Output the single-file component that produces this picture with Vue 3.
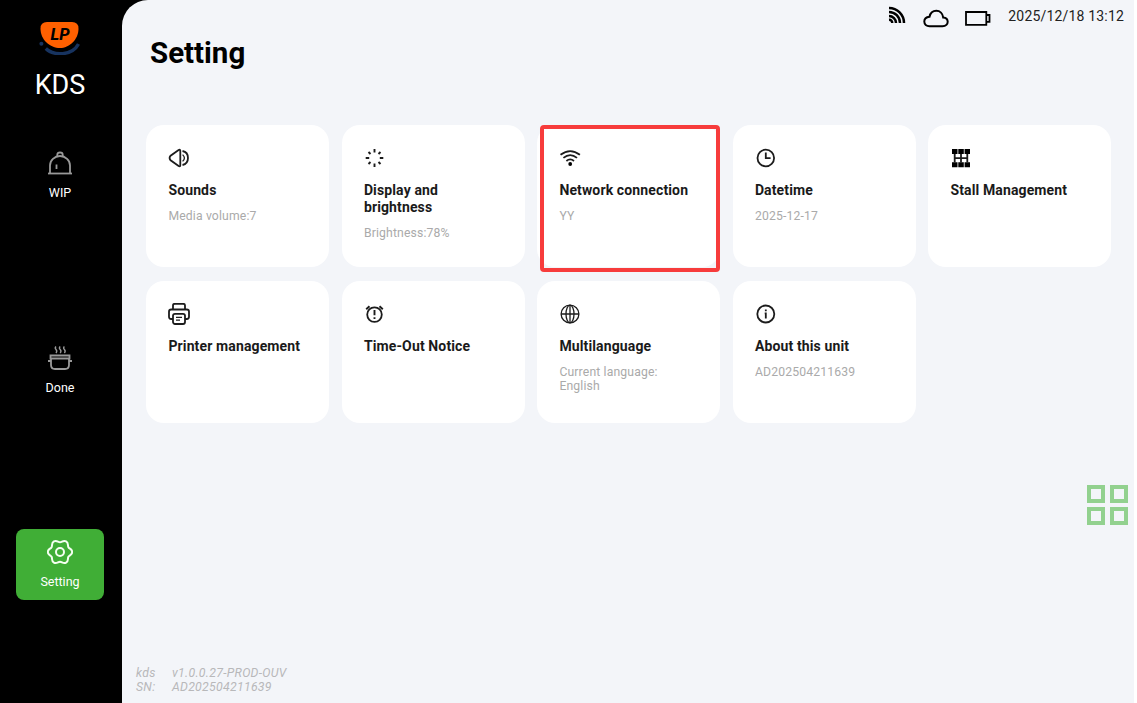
<template>
  <div class="kds-page">
    <aside class="sidebar">
      <svg class="logo" width="42" height="34" viewBox="0 0 42 34">
        <path
          d="M3.5 22.5C8 35 32 37 39.5 23"
          fill="none"
          stroke="#17335f"
          stroke-width="3.4"
          stroke-dasharray="0 6 50"
        />
        <circle cx="2.4" cy="22.8" r="2" fill="#17335f" />
        <path
          d="M8 1H33Q39.5 1 39.5 7.5C39.5 19 30 27 21 27C11 27 1.5 19 1.5 7.5Q1.5 1 8 1Z"
          fill="#ff6000"
        />
        <text x="11.5" y="18.8" class="logo-text">LP</text>
      </svg>
      <div class="brand">KDS</div>

      <nav class="menu">
        <div
          v-for="item in menu"
          :key="item.id"
          class="menu-item"
          :class="{ active: item.id === activeMenu }"
          @click="activeMenu = item.id"
        >
          <svg class="menu-icon" width="26" height="26" viewBox="0 0 26 26">
            <g v-if="item.id === 'wip'">
              <path d="M1 23.5H25" />
              <path d="M3 23V15.5A10 9.500 0 0 1 23 15.500V23" />
              <path d="M10.300 6V4.700Q10.300 2.500 13 2.500T15.700 4.700V6M9.500 14.500V19" />
            </g>
            <g v-else-if="item.id === 'done'">
              <path d="M3.500 10.500H22.500V13.500H3.500ZM4 13.500V20Q4 24 8 24H18Q22 24 22 20V13.500M1 16H4M22 16H25" />
              <path
                d="M9 1.500Q7.500 3 9 4.500T9 8M13.200 1.500Q11.700 3 13.200 4.500T13.200 8M17.400 1.500Q15.900 3 17.400 4.500T17.400 8"
                stroke-width="1.400"
              />
            </g>
            <g v-else>
              <path
                d="M25.200 13C25.200 16.200 22.400 16.100 21.400 17.850C20.400 19.600 21.870 21.970 19.100 23.570C16.330 25.170 15 22.700 13 22.700C11 22.700 9.670 25.170 6.900 23.570C4.130 21.970 5.600 19.600 4.600 17.850C3.600 16.100 .8 16.200 .8 13C.8 9.800 3.600 9.900 4.600 8.150C5.600 6.400 4.130 4.030 6.900 2.430C9.670 .83 11 3.300 13 3.300C15 3.300 16.330 .83 19.100 2.430C21.870 4.030 20.400 6.400 21.400 8.150C22.400 9.900 25.200 9.800 25.200 13Z"
              />
              <circle cx="13" cy="13" r="4" />
            </g>
          </svg>
          <span class="menu-label">{{ item.label }}</span>
        </div>
      </nav>
    </aside>

    <main class="content">
      <header class="header">
        <h1 class="page-title">Setting</h1>
        <div class="status-bar">
          <svg class="rss" width="18" height="18" viewBox="0 0 18 18">
            <path d="M1 13.800A3 3 0 0 1 4.200 17M1 10A7 7 0 0 1 8 17M1 6A11 11 0 0 1 12 17M1 2A15 15 0 0 1 16 17" />
          </svg>
          <svg class="cloud" width="26" height="19" viewBox="0 0 26 19">
            <path
              d="M6.500 17.200H19.500C23 17.200 24.700 15 24.700 12.800C24.700 10.300 22.800 8.700 20.200 8.500C19.700 4.700 17 1.800 13.300 1.800C9.800 1.800 7.300 4.200 6.500 7.700C3.400 8 1.300 10 1.300 12.600C1.300 15.400 3.500 17.200 6.500 17.200Z"
            />
          </svg>
          <svg class="battery" width="26" height="15" viewBox="0 0 26 15">
            <path d="M1 1H21.300V13.800H1ZM21.300 4H24.500V10.800H21.300Z" />
          </svg>
          <span class="clock">2025/12/18 13:12</span>
        </div>
      </header>

      <section class="card-grid">
        <div
          v-for="card in cards"
          :key="card.id"
          class="card"
          :class="{ highlight: card.id === 'network' }"
        >
          <svg class="card-icon" width="22" height="22" viewBox="0 0 22 22">
            <g v-if="card.id === 'sounds'">
              <path d="M12.300 3.800V18.200Q12.300 20 10.600 19L2.600 13.300Q.6 11 2.600 8.700L10.600 3Q12.300 2 12.300 3.800Z" />
              <path d="M14.500 4C21.800 5.500 21.800 16.500 14.500 18" />
              <path d="M14.600 7.600Q18.200 11 14.600 14.400" stroke-width="1.300" />
            </g>
            <path
              v-else-if="card.id === 'display'"
              d="M10.500 2V5.500M10.500 16.500V20M1.700 11H5.200M15.800 11H19.300M4.500 5L6.500 7M14.500 15L16.500 17M16.500 5L14.500 7M6.500 15L4.500 17"
              stroke-width="1.900"
            />
            <g v-else-if="card.id === 'network'">
              <path d="M1.500 7.800Q11.200 .3 20.900 7.800M4.400 10.900Q11.200 5.300 18 10.900M7.400 14Q11.200 10.800 15 14" />
              <circle class="solid" cx="11.200" cy="17" r="1.900" />
            </g>
            <g v-else-if="card.id === 'datetime'">
              <circle cx="10.800" cy="11" r="8.300" />
              <path d="M10.800 5.500V11.200H15.600" />
            </g>
            <g v-else-if="card.id === 'stall'">
              <path class="solid" d="M2 2H7.500V7H2ZM8.300 2H13.800V7H8.300ZM14.600 2H20V7H14.600ZM2 15.300H7.500V20.200H2ZM8.300 15.300H13.800V20.200H8.300ZM14.600 15.300H20V20.200H14.600Z" />
              <path d="M4.700 7V15.500M11 7V15.500M17.300 7V15.500M4 11.200H18" />
            </g>
            <g v-else-if="card.id === 'printer'">
              <path d="M5 6.500V2.500Q5 .8 6.700 .8H15.300Q17 .8 17 2.500V6.500M5 16H3.200Q1 16 1 13.800V8.700Q1 6.500 3.200 6.500H18.800Q21 6.500 21 8.700V13.800Q21 16 18.800 16H17" />
              <rect x="5" y="10.800" width="12" height="10.200" rx="2" />
              <path d="M8 14.300H14M8 17.200H12" stroke-width="1.300" />
            </g>
            <g v-else-if="card.id === 'timeout'">
              <circle cx="10.500" cy="11.600" r="7.300" />
              <path d="M2.200 6.300L5.500 3.200M18.800 6.300L15.500 3.200M10.500 7V12.300M10.500 14.200V16" stroke-width="1.900" />
            </g>
            <g v-else-if="card.id === 'language'" class="thin">
              <circle cx="11" cy="11" r="8.900" />
              <ellipse cx="11" cy="11" rx="4" ry="8.900" />
              <path d="M2 11H20M11 2V20" />
            </g>
            <g v-else>
              <circle cx="10.800" cy="11" r="8.500" />
              <path d="M10.800 6.400V8.200M9.700 10.300H10.800V15.500" />
            </g>
          </svg>
          <h3 class="card-title">{{ card.title }}</h3>
          <p v-if="card.text" class="card-text">{{ card.text }}</p>
        </div>
      </section>

      <footer class="version">
        <span>kds</span><span>v1.0.0.27-PROD-OUV</span>
        <span>SN:</span><span>AD202504211639</span>
      </footer>
    </main>

    <button class="float-button" aria-label="Menu">
      <i v-for="n in 4" :key="n"></i>
    </button>
  </div>
</template>

<script setup>
import { ref } from "vue";

const menu = [
  { id: "wip", label: "WIP" },
  { id: "done", label: "Done" },
  { id: "setting", label: "Setting" },
];

const activeMenu = ref("setting");

const cards = [
  { id: "sounds", title: "Sounds", text: "Media volume:7" },
  { id: "display", title: "Display and brightness", text: "Brightness:78%" },
  { id: "network", title: "Network connection", text: "YY" },
  { id: "datetime", title: "Datetime", text: "2025-12-17" },
  { id: "stall", title: "Stall Management" },
  { id: "printer", title: "Printer management" },
  { id: "timeout", title: "Time-Out Notice" },
  { id: "language", title: "Multilanguage", text: "Current language: English" },
  { id: "about", title: "About this unit", text: "AD202504211639" },
];
</script>

<style>
body {
  margin: 0;
  background: #fff;
}
</style>

<style scoped>
.kds-page {
  display: flex;
  width: 1134px;
  height: 703px;
  overflow: hidden;
  background: #000;
  font-family: Roboto, "Liberation Sans", sans-serif;
  position: relative;
}

svg {
  display: block;
  fill: none;
}

/* Sidebar */
.sidebar {
  width: 120px;
  margin-right: 2px;
  flex-shrink: 0;
  display: flex;
  flex-direction: column;
  align-items: center;
  color: #fff;
}

.logo {
  margin-top: 21px;
}

.logo-text {
  fill: #000;
  font-size: 16.5px;
  font-weight: 800;
  font-style: italic;
}

.brand {
  margin-top: 13px;
  height: 34px;
  line-height: 34px;
  font-size: 27px;
}

.menu {
  margin-top: 38px;
  display: flex;
  flex-direction: column;
  gap: 123.5px;
}

.menu-item {
  width: 88.5px;
  height: 71px;
  box-sizing: border-box;
  padding-top: 10px;
  border-radius: 8px;
  display: flex;
  flex-direction: column;
  align-items: center;
  cursor: pointer;
}

.menu-item.active {
  background: #40ae36;
}

.menu-icon {
  stroke: #999;
  stroke-width: 1.8;
}

.active .menu-icon {
  stroke: #f4fff0;
  stroke-width: 2;
}

.menu-label {
  margin-top: 8px;
  font-size: 12.5px;
  line-height: 17px;
}

/* Content */
.content {
  flex: 1;
  display: flex;
  flex-direction: column;
  background: #f3f5f9;
  border-top-left-radius: 26px;
}

.header {
  height: 125px;
  display: flex;
  justify-content: space-between;
}

.page-title {
  margin: 35px 0 0 28px;
  font-size: 29.5px;
  line-height: 36px;
  font-weight: 700;
  color: #000;
}

.status-bar {
  display: flex;
  align-items: flex-start;
  padding-right: 10px;
}

.status-bar svg {
  stroke: #000;
  stroke-width: 2;
}

.status-bar .rss {
  margin-top: 6px;
  stroke-width: 2.5;
}

.status-bar .cloud {
  margin: 9px 0 0 17px;
}

.status-bar .battery {
  margin: 11px 0 0 16px;
  stroke-width: 1.8;
}

.clock {
  margin: 7px 0 0 17px;
  font-size: 14px;
  line-height: 18px;
  letter-spacing: 0.18px;
  color: #222;
}

.card-grid {
  display: grid;
  grid-template-columns: repeat(5, 183px);
  grid-auto-rows: 142px;
  gap: 14px 12.5px;
  margin-left: 24.4px;
}

.card {
  position: relative;
  box-sizing: border-box;
  padding: 22px;
  border-radius: 18px;
  background: #fff;
}

.card.highlight::after {
  content: "";
  position: absolute;
  inset: 0 0.4px -5px 2.6px;
  border: 4px solid #f73c3c;
  border-radius: 4px;
}

.card-icon {
  stroke: #1c1c1c;
  stroke-width: 1.8;
}

.card-icon .solid {
  fill: #000;
  stroke: none;
}

.card-icon .thin {
  stroke-width: 1.3;
}

.card-title {
  margin: 13px 0 0;
  font-size: 14px;
  line-height: 17px;
  font-weight: 700;
  letter-spacing: 0.13px;
  color: #1a1a1a;
}

.card-text {
  margin: 10px 0 0;
  font-size: 12.2px;
  line-height: 14px;
  letter-spacing: 0.15px;
  color: #aaa;
}

.version {
  display: grid;
  grid-template-columns: 36px auto;
  justify-content: start;
  margin: auto 0 9px 14px;
  font-size: 12.3px;
  line-height: 14px;
  letter-spacing: 0.27px;
  font-style: italic;
  color: #b8b8ba;
}

.float-button {
  position: absolute;
  left: 1087px;
  top: 485px;
  display: grid;
  grid-template-columns: 18px 18px;
  gap: 4px 4.5px;
  padding: 0;
  border: none;
  background: none;
  cursor: pointer;
}

.float-button i {
  box-sizing: border-box;
  height: 18px;
  border: 4.5px solid #92d18f;
}
</style>
